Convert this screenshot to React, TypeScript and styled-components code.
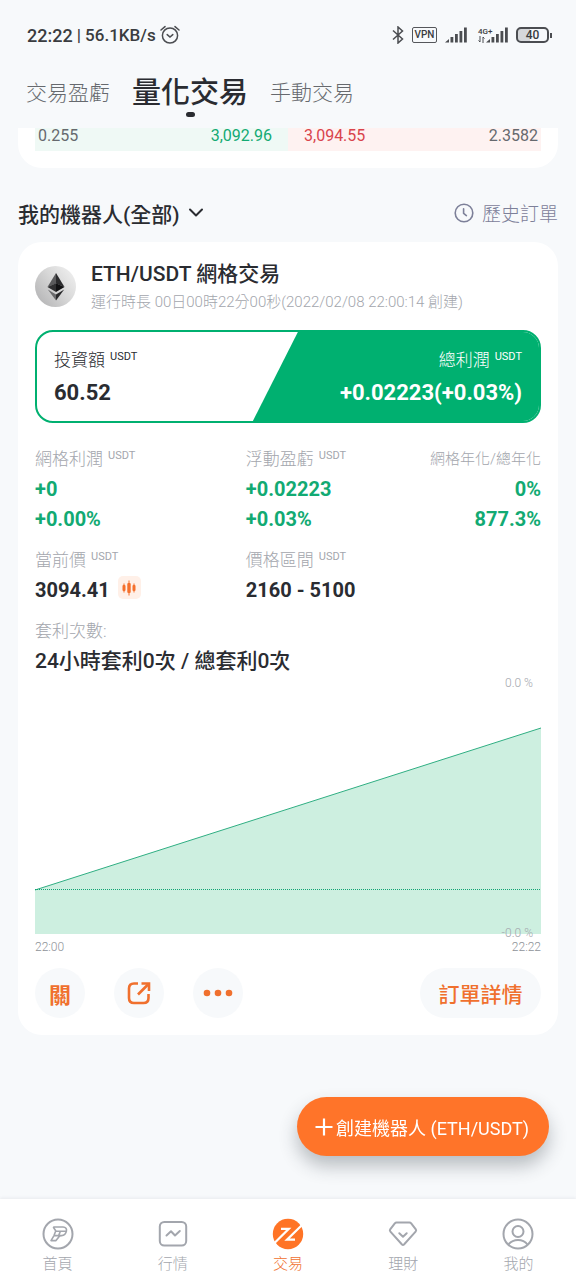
import React from "react";
import styled, { createGlobalStyle } from "styled-components";

const color = {
  page: "#f7f9fb",
  ink: "#2a2c31",
  grey: "#66696e",
  muted: "#a3a6ad",
  slate: "#7d8099",
  green: "#00b070",
  greenText: "#12aa73",
  red: "#d9444c",
  orange: "#ff7429",
  orangeInk: "#f0702e",
};

const GlobalStyle = createGlobalStyle`
  * { box-sizing: border-box; }
  body {
    margin: 0;
    background: ${color.page};
    color: ${color.ink};
    font-family: Roboto, "Noto Sans CJK TC", sans-serif;
  }
  button, a { font-family: inherit; color: inherit; text-decoration: none; }
  button { border: 0; padding: 0; background: none; cursor: pointer; }
  svg { display: block; flex: none; }
  h1, h2, p, dl, dd, dt { margin: 0; font-weight: inherit; font-size: inherit; }
`;

const Screen = styled.div`
  min-height: 100vh;
  display: flex;
  flex-direction: column;
`;

/* ---------- status bar ---------- */

const StatusBar = styled.header`
  display: flex;
  justify-content: space-between;
  align-items: center;
  height: 70px;
  padding: 0 24px 0 27px;
  color: #3a3c40;
`;

const StatusGroup = styled.div<{ $gap: number }>`
  display: flex;
  align-items: center;
  gap: ${(p) => p.$gap}px;
`;

const Clock = styled.span`
  font-size: 18px;
  font-weight: 500;
`;

const NetSpeed = styled.span`
  font-size: 17px;
  font-weight: 500;
`;

const VpnBadge = styled.span`
  border: 1px solid #55575b;
  border-radius: 2px;
  width: 25px;
  height: 16px;
  font-size: 10px;
  font-weight: 500;
  line-height: 14px;
  text-align: center;
`;

const MobileSignal = styled.span`
  display: flex;
  align-items: flex-end;
  padding-left: 3px;
`;

const NetType = styled.span`
  display: flex;
  flex-direction: column;
  align-items: flex-start;
  width: 8px;
  font-size: 8px;
  font-weight: 500;
  line-height: 8px;
  white-space: nowrap;
`;

const Battery = styled.span`
  display: flex;
  align-items: center;
`;

const BatteryBody = styled.span`
  width: 33px;
  height: 16px;
  border: 2px solid #4b4d51;
  border-radius: 5px;
  background: linear-gradient(90deg, #d5d7da 40%, transparent 40%);
  font-size: 12px;
  font-weight: 500;
  line-height: 13px;
  text-align: center;
`;

const BatteryTip = styled.span`
  width: 2px;
  height: 5px;
  margin-left: 1px;
  background: #4b4d51;
`;

/* ---------- top tabs ---------- */

const Tabs = styled.nav`
  display: flex;
  align-items: center;
  gap: 22px;
  height: 58px;
  padding: 0 26px 12px;
`;

const Tab = styled.button<{ $active?: boolean }>`
  display: flex;
  flex-direction: column;
  align-items: center;
  font-size: ${(p) => (p.$active ? 29 : 21)}px;
  font-weight: ${(p) => (p.$active ? 500 : 300)};
  line-height: 38px;
  color: ${(p) => (p.$active ? color.ink : color.grey)};
`;

const TabMark = styled.span`
  width: 9px;
  height: 5px;
  margin-bottom: -5px;
  border-radius: 3px;
  background: ${color.ink};
`;

/* ---------- order book remainder ---------- */

const Content = styled.main`
  flex: 1;
  padding: 0 18px 163px;
`;

const BookCard = styled.section`
  padding: 0 17px 17px;
  border-radius: 0 0 24px 24px;
  background: #fff;
`;

const BookRow = styled.div`
  display: flex;
  height: 23px;
  font-size: 16px;
  line-height: 16px;
`;

const BookSide = styled.div<{ $side: "buy" | "sell" }>`
  flex: 1;
  display: flex;
  justify-content: space-between;
  padding: ${(p) => (p.$side === "buy" ? "0 16px 0 3px" : "0 3px 0 16px")};
  background: ${(p) => (p.$side === "buy" ? "#eff9f5" : "#fef2f1")};
  color: ${color.grey};
`;

const Price = styled.span<{ $side: "buy" | "sell" }>`
  color: ${(p) => (p.$side === "buy" ? color.greenText : color.red)};
`;

/* ---------- section heading ---------- */

const SectionHead = styled.div`
  display: flex;
  justify-content: space-between;
  align-items: center;
  height: 74px;
  padding-top: 15px;
`;

const RobotFilter = styled.button`
  display: flex;
  align-items: center;
  gap: 8px;
  font-size: 21px;
  font-weight: 500;
`;

const HistoryLink = styled.a`
  display: flex;
  align-items: center;
  gap: 8px;
  font-size: 19px;
  font-weight: 300;
  color: ${color.slate};
`;

/* ---------- robot card ---------- */

const Card = styled.article`
  padding: 17px;
  border-radius: 24px;
  background: #fff;
`;

const CardHead = styled.div`
  display: flex;
  align-items: center;
  gap: 15px;
  height: 54px;
`;

const PairName = styled.h2`
  font-size: 21px;
  font-weight: 500;
  line-height: 32px;
`;

const RunTime = styled.p`
  font-size: 15px;
  font-weight: 300;
  line-height: 24px;
  color: ${color.muted};
`;

const ProfitBox = styled.div`
  display: flex;
  justify-content: space-between;
  height: 93px;
  margin-top: 17px;
  border: 2px solid ${color.green};
  border-radius: 18px;
  overflow: hidden;
`;

const ProfitPart = styled.dl<{ $filled?: boolean }>`
  display: flex;
  flex-direction: column;
  justify-content: center;
  align-items: ${(p) => (p.$filled ? "flex-end" : "flex-start")};
  width: ${(p) => (p.$filled ? "57%" : "auto")};
  padding: 2px 17px 0;
  color: ${(p) => (p.$filled ? "#fff" : color.ink)};
  background: ${(p) => (p.$filled ? color.green : "transparent")};
  clip-path: ${(p) => (p.$filled ? "polygon(45px 0, 100% 0, 100% 100%, 0 100%)" : "none")};
`;

const ProfitValue = styled.dd`
  font-size: 22px;
  font-weight: 700;
  line-height: 36px;
`;

const Label = styled.dt<{ $small?: boolean; $tone?: string }>`
  display: flex;
  align-items: center;
  gap: 5px;
  height: 30px;
  padding-bottom: 3px;
  font-size: ${(p) => (p.$small ? 15 : 17)}px;
  font-weight: 300;
  color: ${(p) => p.$tone ?? color.muted};
  white-space: nowrap;
`;

const Unit = styled.span`
  padding-bottom: 4px;
  font-size: 11px;
  font-weight: 400;
`;

const Stats = styled.dl`
  display: grid;
  grid-template-columns: 5fr 4fr 3fr;
  row-gap: 11px;
  margin-top: 21px;
`;

const Stat = styled.div<{ $end?: boolean; $wide?: boolean }>`
  display: flex;
  flex-direction: column;
  align-items: ${(p) => (p.$end ? "flex-end" : "flex-start")};
  grid-column: ${(p) => (p.$wide ? "1 / -1" : "auto")};
`;

const Value = styled.dd<{ $gain?: boolean; $text?: boolean }>`
  display: flex;
  align-items: center;
  gap: 8px;
  font-size: ${(p) => (p.$text ? 21 : 20)}px;
  font-weight: ${(p) => (p.$text ? 500 : 700)};
  line-height: 30px;
  color: ${(p) => (p.$gain ? color.greenText : color.ink)};
`;

const KlineButton = styled.button`
  display: flex;
  align-items: center;
  justify-content: center;
  width: 23px;
  height: 23px;
  margin-bottom: 5px;
  border-radius: 5px;
  background: #fff0e8;
`;

/* ---------- chart ---------- */

const ChartArea = styled.div`
  position: relative;
  height: 258px;
`;

const ChartSvg = styled.svg`
  width: 100%;
  height: 100%;
`;

const AxisValue = styled.span<{ $edge: "top" | "bottom" }>`
  position: absolute;
  right: 8px;
  ${(p) => (p.$edge === "top" ? "top: 0" : "bottom: -6px")};
  font-size: 12px;
  font-weight: 300;
  line-height: 14px;
  color: ${color.muted};
`;

const TimeAxis = styled.div`
  display: flex;
  justify-content: space-between;
  padding: 5px 0 13px;
  font-size: 12px;
  font-weight: 300;
  line-height: 16px;
  color: #8e9298;
`;

/* ---------- card actions ---------- */

const Actions = styled.div`
  display: flex;
  gap: 29px;
`;

const ActionButton = styled.button<{ $wide?: boolean }>`
  display: flex;
  align-items: center;
  justify-content: center;
  width: ${(p) => (p.$wide ? 121 : 50)}px;
  height: 50px;
  margin-left: ${(p) => (p.$wide ? "auto" : "0")};
  border-radius: 25px;
  background: ${color.page};
  color: ${color.orangeInk};
  font-size: ${(p) => (p.$wide ? 21 : 22)}px;
  font-weight: ${(p) => (p.$wide ? 500 : 700)};
`;

const CreateButton = styled.button`
  position: fixed;
  right: 27px;
  bottom: 124px;
  display: flex;
  align-items: center;
  gap: 3px;
  height: 59px;
  padding: 0 20px 0 18px;
  border-radius: 30px;
  background: ${color.orange};
  color: #fff;
  font-size: 18px;
  font-weight: 400;
  box-shadow: 0 10px 18px rgba(40, 50, 60, 0.3);
`;

/* ---------- bottom navigation ---------- */

const BottomNav = styled.nav`
  position: sticky;
  bottom: 0;
  display: flex;
  height: 81px;
  background: #fff;
  box-shadow: 0 -1px 3px rgba(60, 70, 90, 0.08);
`;

const NavItem = styled.a<{ $active?: boolean }>`
  flex: 1;
  display: flex;
  flex-direction: column;
  align-items: center;
  gap: 3px;
  padding-top: 19px;
  font-size: 15px;
  font-weight: 300;
  line-height: 22px;
  color: ${(p) => (p.$active ? color.orangeInk : color.muted)};
`;

/* ---------- icons ---------- */

const AlarmIcon = () => (
  <svg width="20" height="20" viewBox="0 0 20 20" fill="none" stroke="#4b4d51" strokeWidth="1.5" strokeLinecap="round">
    <circle cx="10" cy="10.5" r="7.6" />
    <path d="M7.2 9.6 L10 12 L12.8 9.6" />
    <path d="M1 5 L5 1.6 M15 1.6 L19 5" />
  </svg>
);

const BluetoothIcon = () => (
  <svg width="12" height="18" viewBox="0 0 12 18" fill="none" stroke="#4b4d51" strokeWidth="1.5">
    <path d="M1 4.5 L10.5 13 L6 17 V1 L10.5 5 L1 13.5" />
  </svg>
);

const SignalIcon = () => (
  <svg width="22" height="16" viewBox="0 0 22 16" fill="#4b4d51">
    <path d="M0 15.5 L4 12 V15.5 Z" />
    <rect x="5.5" y="10" width="2.8" height="5.5" />
    <rect x="10" y="7" width="2.8" height="8.5" />
    <rect x="14.5" y="4" width="2.8" height="11.5" />
    <rect x="19" y="0.5" width="2.8" height="15" />
  </svg>
);

const DataArrowsIcon = () => (
  <svg width="7" height="7" viewBox="0 0 7 7" fill="none" stroke="#4b4d51" strokeWidth="1">
    <path d="M2 0 V6 L0.5 4.5 M5 7 V1 L6.5 2.5" />
  </svg>
);

const ChevronIcon = () => (
  <svg width="16" height="10" viewBox="0 0 16 10" fill="none" stroke={color.ink} strokeWidth="2" strokeLinecap="round" strokeLinejoin="round">
    <path d="M2 1.5 L8 7.5 L14 1.5" />
  </svg>
);

const HistoryIcon = () => (
  <svg width="20" height="20" viewBox="0 0 20 20" fill="none" stroke={color.slate} strokeWidth="1.6" strokeLinecap="round" strokeLinejoin="round">
    <circle cx="10" cy="10" r="8.8" />
    <path d="M9.6 5.8 V10.4 L12.4 12.6" />
  </svg>
);

const EthLogo = () => (
  <svg width="41" height="41" viewBox="0 0 41 41" role="img" aria-label="ETH">
    <defs>
      <linearGradient id="coin" x1="1" y1="0.1" x2="0.1" y2="0.8">
        <stop offset="0" stopColor="#f1f1f1" />
        <stop offset="0.5" stopColor="#d8d8d8" />
        <stop offset="1" stopColor="#b9b9ba" />
      </linearGradient>
    </defs>
    <circle cx="20.5" cy="20.5" r="20.5" fill="url(#coin)" />
    <path d="M21 7 L12.5 21 L21 17.5 Z" fill="#5a5a5c" />
    <path d="M21 7 L29.5 21 L21 17.5 Z" fill="#2b2b2d" />
    <path d="M12.5 21 L21 17.3 V26 Z" fill="#2f2f31" />
    <path d="M29.5 21 L21 17.3 V26 Z" fill="#111113" />
    <path d="M12.8 23.4 L21 28.4 V34.5 Z" fill="#6a6a6c" />
    <path d="M29.2 23.4 L21 28.4 V34.5 Z" fill="#29292b" />
  </svg>
);

const KlineIcon = () => (
  <svg width="14" height="16" viewBox="0 0 14 16" fill="#f5702d">
    <rect x="0.5" y="5" width="3" height="6" rx="1" />
    <rect x="1.5" y="3.5" width="1" height="9" />
    <rect x="5.3" y="3" width="3.4" height="10" rx="1" />
    <rect x="6.5" y="0.5" width="1" height="15" />
    <rect x="10.5" y="5" width="3" height="6" rx="1" />
    <rect x="11.5" y="3.5" width="1" height="9" />
  </svg>
);

const ShareIcon = () => (
  <svg width="24" height="24" viewBox="0 0 24 24" fill="none" stroke={color.orangeInk} strokeWidth="2.6">
    <path d="M11 2.5 H7 Q2 2.5 2 7.5 V17 Q2 22 7 22 H16.5 Q21.5 22 21.5 17 V13" />
    <path d="M11 13.5 L21 3.5" />
    <path d="M14.5 2.5 H22 V10" />
  </svg>
);

const MoreIcon = () => (
  <svg width="30" height="8" viewBox="0 0 30 8" fill={color.orangeInk}>
    <circle cx="4" cy="4" r="3.3" />
    <circle cx="15" cy="4" r="3.3" />
    <circle cx="26" cy="4" r="3.3" />
  </svg>
);

const PlusIcon = () => (
  <svg width="18" height="18" viewBox="0 0 18 18" stroke="#fff" strokeWidth="2.2">
    <path d="M9 0.5 V17.5 M0.5 9 H17.5" />
  </svg>
);

const HomeIcon = () => (
  <svg width="32" height="32" viewBox="0 0 32 32" fill="none" stroke={color.muted} strokeWidth="2" strokeLinejoin="round">
    <circle cx="16" cy="16" r="14.5" />
    <path strokeWidth="1.6" d="M11.2 9 H21 Q25.2 9.2 24.4 13.2 Q23.6 17.4 19.5 17.6 L17.6 18 L14 22.6 H9 L12 17.6 H19 M12 17.6 L13.6 13.2 H24 M11.2 9 L14 13.2 M18.4 13.2 L16.6 17.6" />
  </svg>
);

const MarketIcon = () => (
  <svg width="32" height="32" viewBox="0 0 32 32" fill="none" stroke={color.muted} strokeWidth="2" strokeLinejoin="round" strokeLinecap="round">
    <rect x="2.8" y="4" width="26.4" height="23.6" rx="4.5" />
    <path d="M9.5 17.5 L14 13.3 L18 17.5 L22.8 13" />
  </svg>
);

const TradeIcon = () => (
  <svg width="32" height="32" viewBox="0 0 32 32">
    <circle cx="16" cy="16" r="15.2" fill="#ff7426" />
    <path d="M9 10.8 H16.8 L2.5 25 M29.5 7.5 L15 21.6 H23" fill="none" stroke="#fff" strokeWidth="2.2" />
  </svg>
);

const FinanceIcon = () => (
  <svg width="32" height="32" viewBox="0 0 32 32" fill="none" stroke={color.muted} strokeWidth="2" strokeLinejoin="round" strokeLinecap="round">
    <path d="M9.5 4.5 H22.5 Q23.5 4.5 24.2 5.300 L28.800 11.300 Q29.600 12.500 28.600 13.600 L17 26.500 Q16 27.500 15 26.500 L3.400 13.600 Q2.400 12.500 3.200 11.300 L7.800 5.300 Q8.500 4.500 9.500 4.500 Z" />
    <path d="M12.3 15.3 L16 18.7 L19.7 15.3" />
  </svg>
);

const ProfileIcon = () => (
  <svg width="32" height="32" viewBox="0 0 32 32" fill="none" stroke={color.muted} strokeWidth="2">
    <circle cx="16" cy="16" r="14.5" />
    <circle cx="16" cy="13.5" r="5.5" />
    <path d="M6.5 26.5 Q10 22 16 22 Q22 22 25.5 26.5" />
  </svg>
);

/* ---------- page ---------- */

const navItems = [
  { name: "首頁", Icon: HomeIcon },
  { name: "行情", Icon: MarketIcon },
  { name: "交易", Icon: TradeIcon, active: true },
  { name: "理財", Icon: FinanceIcon },
  { name: "我的", Icon: ProfileIcon },
];

const ProfitChart = () => (
  <>
    <ChartArea>
      <ChartSvg viewBox="0 0 506 258" preserveAspectRatio="none" aria-hidden="true">
        <path d="M0 214 L506 52 V258 H0 Z" fill="#cdefe0" />
        <path d="M0 214 L506 52" fill="none" stroke="#2fae82" strokeWidth="1" vectorEffect="non-scaling-stroke" />
        <path d="M0 213.5 H506" fill="none" stroke="#12a374" strokeWidth="1" strokeDasharray="1 1" vectorEffect="non-scaling-stroke" />
      </ChartSvg>
      <AxisValue $edge="top">0.0 %</AxisValue>
      <AxisValue $edge="bottom">-0.0 %</AxisValue>
    </ChartArea>
    <TimeAxis>
      <span>22:00</span>
      <span>22:22</span>
    </TimeAxis>
  </>
);

export default function App() {
  return (
    <Screen>
      <GlobalStyle />
      <StatusBar>
        <StatusGroup $gap={4}>
          <Clock>22:22</Clock>
          <NetSpeed>| 56.1KB/s</NetSpeed>
          <AlarmIcon />
        </StatusGroup>
        <StatusGroup $gap={8}>
          <BluetoothIcon />
          <VpnBadge>VPN</VpnBadge>
          <SignalIcon />
          <MobileSignal>
            <NetType>
              4G+
              <DataArrowsIcon />
            </NetType>
            <SignalIcon />
          </MobileSignal>
          <Battery>
            <BatteryBody>40</BatteryBody>
            <BatteryTip />
          </Battery>
        </StatusGroup>
      </StatusBar>

      <Tabs>
        <Tab>交易盈虧</Tab>
        <Tab $active aria-current="page">
          量化交易
          <TabMark />
        </Tab>
        <Tab>手動交易</Tab>
      </Tabs>

      <Content>
        <BookCard>
          <BookRow>
            <BookSide $side="buy">
              <span>0.255</span>
              <Price $side="buy">3,092.96</Price>
            </BookSide>
            <BookSide $side="sell">
              <Price $side="sell">3,094.55</Price>
              <span>2.3582</span>
            </BookSide>
          </BookRow>
        </BookCard>

        <SectionHead>
          <RobotFilter aria-haspopup="listbox">
            我的機器人(全部)
            <ChevronIcon />
          </RobotFilter>
          <HistoryLink href="#history">
            <HistoryIcon />
            歷史訂單
          </HistoryLink>
        </SectionHead>

        <Card>
          <CardHead>
            <EthLogo />
            <div>
              <PairName>ETH/USDT 網格交易</PairName>
              <RunTime>運行時長 00日00時22分00秒(2022/02/08 22:00:14 創建)</RunTime>
            </div>
          </CardHead>

          <ProfitBox>
            <ProfitPart>
              <Label $tone={color.ink}>投資額 <Unit>USDT</Unit></Label>
              <ProfitValue>60.52</ProfitValue>
            </ProfitPart>
            <ProfitPart $filled>
              <Label $tone="#fff">總利潤 <Unit>USDT</Unit></Label>
              <ProfitValue>+0.02223(+0.03%)</ProfitValue>
            </ProfitPart>
          </ProfitBox>

          <Stats>
            <Stat>
              <Label>網格利潤 <Unit>USDT</Unit></Label>
              <Value $gain>+0</Value>
              <Value $gain>+0.00%</Value>
            </Stat>
            <Stat>
              <Label>浮動盈虧 <Unit>USDT</Unit></Label>
              <Value $gain>+0.02223</Value>
              <Value $gain>+0.03%</Value>
            </Stat>
            <Stat $end>
              <Label $small>網格年化/總年化</Label>
              <Value $gain>0%</Value>
              <Value $gain>877.3%</Value>
            </Stat>
            <Stat>
              <Label>當前價 <Unit>USDT</Unit></Label>
              <Value>
                3094.41
                <KlineButton aria-label="K線">
                  <KlineIcon />
                </KlineButton>
              </Value>
            </Stat>
            <Stat>
              <Label>價格區間 <Unit>USDT</Unit></Label>
              <Value>2160 - 5100</Value>
            </Stat>
            <Stat $wide>
              <Label>套利次數:</Label>
              <Value $text>24小時套利0次 / 總套利0次</Value>
            </Stat>
          </Stats>

          <ProfitChart />

          <Actions>
            <ActionButton>關</ActionButton>
            <ActionButton aria-label="分享">
              <ShareIcon />
            </ActionButton>
            <ActionButton aria-label="更多">
              <MoreIcon />
            </ActionButton>
            <ActionButton $wide>訂單詳情</ActionButton>
          </Actions>
        </Card>
      </Content>

      <CreateButton>
        <PlusIcon />
        創建機器人 (ETH/USDT)
      </CreateButton>

      <BottomNav>
        {navItems.map(({ name, Icon, active }) => (
          <NavItem key={name} href={`#${name}`} $active={active}>
            <Icon />
            {name}
          </NavItem>
        ))}
      </BottomNav>
    </Screen>
  );
}
